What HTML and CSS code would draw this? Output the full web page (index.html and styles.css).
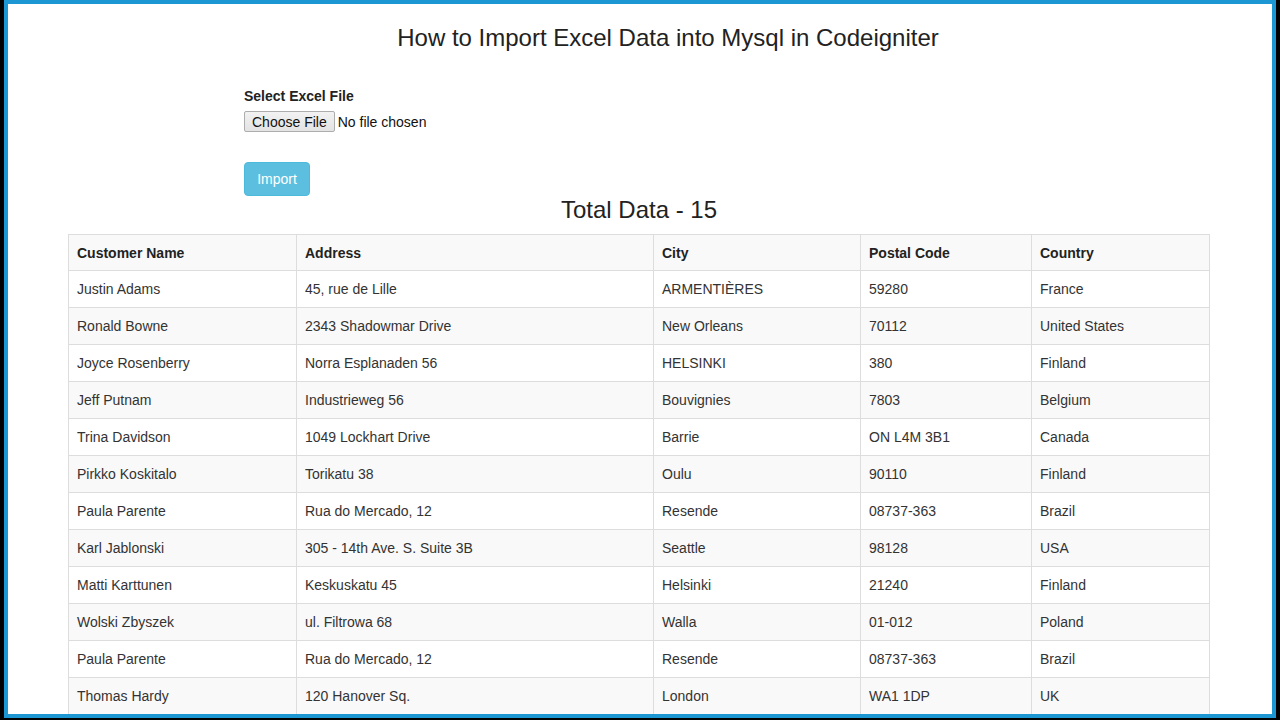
FILE: index.html
```html
<!DOCTYPE html>
<html lang="en">
<head>
<meta charset="utf-8">
<title>Import Excel Data into Mysql</title>
<link rel="stylesheet" href="styles.css">
</head>
<body>
<div class="screen">
  <div class="page">
    <h3 class="page-title">How to Import Excel Data into Mysql in Codeigniter</h3>

    <div class="container">
      <form class="import-form" method="post" enctype="multipart/form-data">
        <label class="field-label" for="file">Select Excel File</label>
        <div class="file-field">
          <label class="file-btn">Choose File<input type="file" id="file" name="file" class="file-input"></label>
          <span class="file-name">No file chosen</span>
        </div>
        <button type="submit" class="btn-import">Import</button>
      </form>

      <h3 class="total">Total Data - 15</h3>

      <table class="data-table">
        <colgroup>
          <col class="c-name">
          <col class="c-address">
          <col class="c-city">
          <col class="c-postal">
          <col class="c-country">
        </colgroup>
        <tbody>
          <tr class="head-row">
            <th>Customer Name</th>
            <th>Address</th>
            <th>City</th>
            <th>Postal Code</th>
            <th>Country</th>
          </tr>
          <tr><td>Justin Adams</td><td>45, rue de Lille</td><td>ARMENTIÈRES</td><td>59280</td><td>France</td></tr>
          <tr><td>Ronald Bowne</td><td>2343 Shadowmar Drive</td><td>New Orleans</td><td>70112</td><td>United States</td></tr>
          <tr><td>Joyce Rosenberry</td><td>Norra Esplanaden 56</td><td>HELSINKI</td><td>380</td><td>Finland</td></tr>
          <tr><td>Jeff Putnam</td><td>Industrieweg 56</td><td>Bouvignies</td><td>7803</td><td>Belgium</td></tr>
          <tr><td>Trina Davidson</td><td>1049 Lockhart Drive</td><td>Barrie</td><td>ON L4M 3B1</td><td>Canada</td></tr>
          <tr><td>Pirkko Koskitalo</td><td>Torikatu 38</td><td>Oulu</td><td>90110</td><td>Finland</td></tr>
          <tr><td>Paula Parente</td><td>Rua do Mercado, 12</td><td>Resende</td><td>08737-363</td><td>Brazil</td></tr>
          <tr><td>Karl Jablonski</td><td>305 - 14th Ave. S. Suite 3B</td><td>Seattle</td><td>98128</td><td>USA</td></tr>
          <tr><td>Matti Karttunen</td><td>Keskuskatu 45</td><td>Helsinki</td><td>21240</td><td>Finland</td></tr>
          <tr><td>Wolski Zbyszek</td><td>ul. Filtrowa 68</td><td>Walla</td><td>01-012</td><td>Poland</td></tr>
          <tr><td>Paula Parente</td><td>Rua do Mercado, 12</td><td>Resende</td><td>08737-363</td><td>Brazil</td></tr>
          <tr><td>Thomas Hardy</td><td>120 Hanover Sq.</td><td>London</td><td>WA1 1DP</td><td>UK</td></tr>
          <tr><td>Yang Wang</td><td>Hauptstr. 29</td><td>Bern</td><td>3012</td><td>Switzerland</td></tr>
          <tr><td>Hanna Moos</td><td>Forsterstr. 57</td><td>Mannheim</td><td>68306</td><td>Germany</td></tr>
          <tr><td>Martine Rancé</td><td>184, chaussée de Tournai</td><td>Lille</td><td>59000</td><td>France</td></tr>
        </tbody>
      </table>
    </div>
  </div>
</div>
</body>
</html>
```

FILE: styles.css
```css
* {
  box-sizing: border-box;
}

html, body {
  margin: 0;
  padding: 0;
  background: #000;
}

body {
  font-family: "Liberation Sans", Arial, Helvetica, sans-serif;
  font-size: 14px;
  line-height: 20px;
  color: #333;
}

/* dark bezel with a blue window border */
.screen {
  width: 1280px;
  height: 720px;
  padding: 0 4px 2px 4px;
  background: #000;
  overflow: hidden;
}

.page {
  height: 718px;
  border: 4px solid #1d97d3;
  background: #fff;
  overflow: hidden;
}

.page-title {
  margin: 21px 0 0;
  padding-left: 56px;
  font-size: 24px;
  font-weight: 400;
  line-height: 26px;
  text-align: center;
  color: #222;
}

.container {
  padding: 0 59px 0 60px;
}

.import-form {
  display: flex;
  flex-direction: column;
  align-items: flex-start;
  padding-left: 176px;
  margin-top: 35px;
}

.field-label {
  font-weight: 700;
  margin-bottom: 5px;
  color: #222;
}

.file-field {
  display: flex;
  align-items: center;
  height: 21px;
  margin-bottom: 30px;
}

.file-btn {
  display: inline-flex;
  align-items: center;
  height: 21px;
  padding: 0 7px;
  border: 1px solid #adadad;
  border-radius: 2px;
  background: linear-gradient(#f2f2f2, #e3e3e3);
  color: #111;
  font-size: 14px;
  cursor: pointer;
}

.file-input {
  display: none;
}

.file-name {
  margin-left: 3px;
  color: #111;
}

.btn-import {
  width: 66px;
  height: 34px;
  padding: 6px 12px;
  border: 1px solid #4cbadb;
  border-radius: 4px;
  background: #5cbfdf;
  color: #fff;
  font-family: inherit;
  font-size: 14px;
  line-height: 20px;
}

.total {
  margin: 1px 0 11px;
  padding-right: 3px;
  font-size: 24px;
  font-weight: 400;
  line-height: 26px;
  text-align: center;
  color: #222;
}

.data-table {
  width: 1141px;
  border-collapse: collapse;
  table-layout: fixed;
  border: 1px solid #ddd;
}

.c-name { width: 228px; }
.c-address { width: 357px; }
.c-city { width: 207px; }
.c-postal { width: 171px; }
.c-country { width: 178px; }

.data-table th,
.data-table td {
  padding: 8px;
  border: 1px solid #ddd;
  text-align: left;
  vertical-align: top;
  line-height: 20px;
  white-space: nowrap;
  color: #333;
}

.data-table th {
  padding-bottom: 7px;
  font-weight: 700;
  color: #222;
}

.data-table tr:nth-of-type(odd) {
  background: #f9f9f9;
}
```
